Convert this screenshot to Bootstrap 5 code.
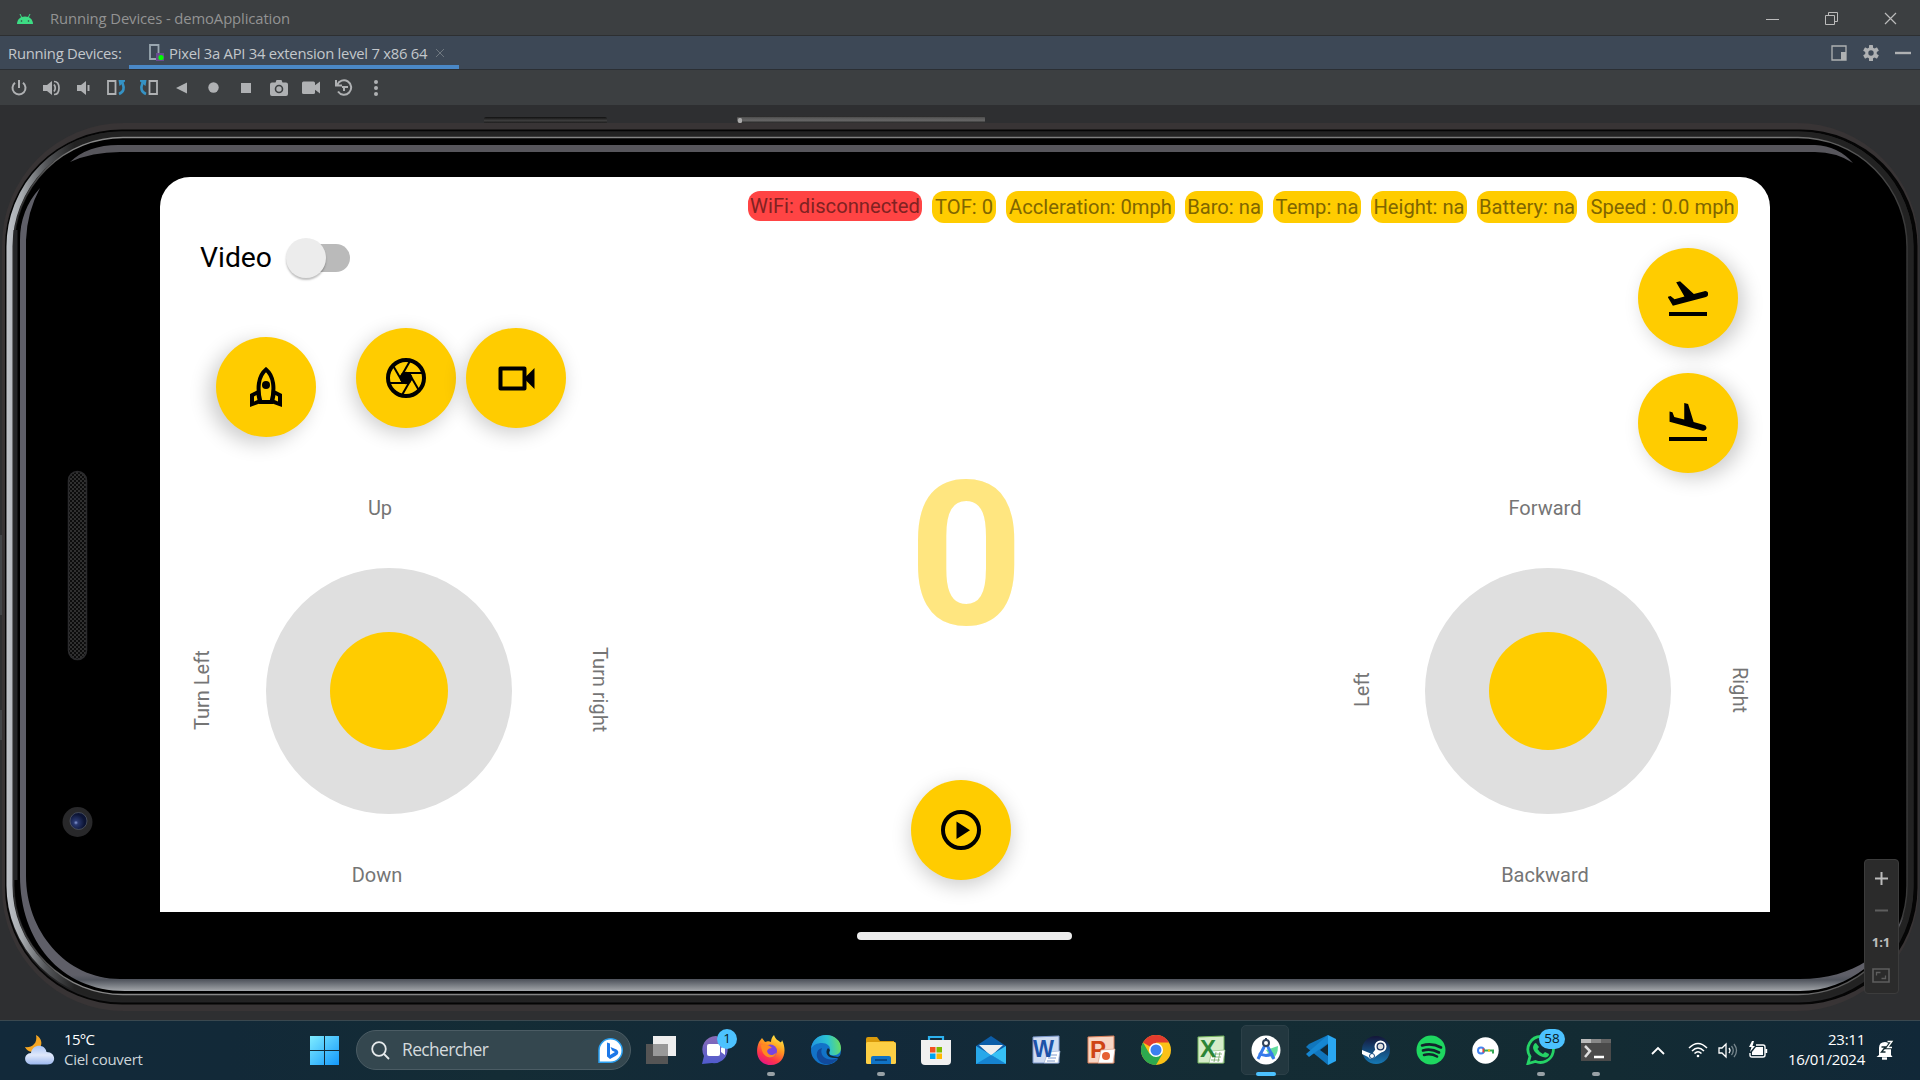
<!DOCTYPE html>
<html lang="fr">
<head>
<meta charset="utf-8">
<title>Running Devices - demoApplication</title>
<link rel="stylesheet" href="https://cdn.jsdelivr.net/npm/bootstrap@5.3.0/dist/css/bootstrap.min.css">
<style>
body{width:1920px;height:1080px;overflow:hidden;background:#2e2f31;font-family:"Open Sans","Noto Sans",sans-serif;line-height:1}
svg{display:block;flex:none}
.titlebar{height:36px;background:#3c3f41;border-bottom:1px solid #2d2f31;color:#939393;font-size:14.8px;padding:2px 17px 0}
.titlebar .caption-text{margin-left:17px;letter-spacing:-.1px}
.win-btns{gap:46px;margin-right:6px}
.tabstrip{height:34px;background:#3d4856;border-bottom:1px solid #2b2f34;color:#c3c7cb;font-size:14.8px;padding-left:8px;padding-right:8px}
.strip-label{width:121px;letter-spacing:-.25px;padding-top:2px}
.dev-tab{width:330px;height:33px;border-bottom:4px solid #4a88c7;padding:4px 14px 0 20px}
.dev-tab .tab-name{margin-left:5px;width:258px;letter-spacing:-.25px;white-space:nowrap;padding-top:1px}
.tab-tools{gap:16px;margin-right:1px}
.toolstrip{height:35px;background:#3c3f41;padding-left:3px}
.tool{width:32.45px;height:35px;display:flex;align-items:center;justify-content:center}
.stage{height:915px;position:relative;padding:72px 150px 0 160px}
.phone-shell{position:absolute;left:0;top:0}
.screen{position:relative;height:735px;width:1610px;background:#fff;border-radius:30px 30px 0 0;font-family:Roboto,sans-serif;color:#757575;font-size:20px}
.chips{padding:14px 32px 0 0;gap:10px;height:46px}
.chip{height:32px;border-radius:12px;background:#fc0;color:#806600;display:flex;align-items:center;justify-content:center;white-space:nowrap;padding-top:1px;font-size:20.2px}
.chip-off{height:30px;background:#f44;color:#802222}
.col-l{width:460px}.col-r{width:420px}
.col-c{padding-right:40px}
.video-row{padding:14px 0 0 40px;height:55px;color:#000;font-size:28.3px}
.video-row span:first-child{padding-top:2px}
.toggle{width:64px;height:40px;margin-left:14px;position:relative;display:flex;align-items:center}
.toggle::before{content:"";width:50px;height:28px;margin-left:14px;border-radius:14px;background:#bababa}
.toggle::after{content:"";position:absolute;left:0;top:0;width:40px;height:40px;border-radius:50%;background:#ececec;box-shadow:0 2px 2px rgba(0,0,0,.25)}
.fab{width:100px;height:100px;border-radius:50%;background:#fc0;display:flex;align-items:center;justify-content:center;flex:none;box-shadow:-3px 5px 20px rgba(0,0,0,.2)}
.fab-r{box-shadow:6px 5px 20px rgba(0,0,0,.2)}
.fab-c{box-shadow:0 6px 20px rgba(0,0,0,.2)}
.fab-row{padding:50px 0 0 56px;height:160px}
.fab-row .fab:nth-child(1){margin-top:9px;margin-right:40px;box-shadow:-7px 6px 20px rgba(0,0,0,.2)}
.fab-row .fab:nth-child(2){margin-right:10px}
.dir{height:24px;display:flex;align-items:center;justify-content:center}
.vert{writing-mode:vertical-rl;width:24px;height:120px;display:flex;align-items:center;justify-content:center;white-space:nowrap;margin-top:-2px}
.flip{transform:rotate(180deg)}
.pad{width:246px;height:246px;border-radius:50%;background:#dfdfdf;display:flex;align-items:center;justify-content:center;flex:none}
.pad::after{content:"";width:118px;height:118px;border-radius:50%;background:#fc0}
.count{font-weight:700;font-size:200px;color:#ffe680;line-height:200px;margin-top:233px;margin-left:2px}
.home-bar{position:relative;width:215px;height:8px;border-radius:4px;background:#ececec;margin:20px 0 0 697px}
.zoom-box{position:absolute;left:1864px;top:754px;width:35px;height:135px;background:#2b2b2b;border:1px solid #3c3c3c;border-radius:4px;padding:12px 1px 10px 0;color:#bbb;font-size:13px;font-weight:700}
.taskbar{height:60px;background:linear-gradient(90deg,#12293a 0,#122938 12%,#142c35 26%,#12293a 45%,#142c34 64%,#132b33 84%,#112838);border-top:1px solid #3a484f;padding-bottom:1px;color:#fff;font-size:15px}
.weather{width:310px;padding-left:24px}
.weather-text{margin-left:9px;line-height:20px;padding-bottom:3px}
.finder{width:275px;height:40px;border-radius:20px;background:#34474f;border:1px solid #4b5c64;margin:0 2px 0 17px;padding:0 7px 0 14px;color:#d5dbde;font-size:17.4px}
.app{width:55px;height:59px;position:relative;display:flex;align-items:center;justify-content:center;flex:none}
.run::after,.live::after{content:"";position:absolute;bottom:4px;width:8px;height:4px;border-radius:2px;background:#98a1a6}
.live::after{width:20px;background:#4cc2ff}
.live::before{content:"";position:absolute;left:3px;top:4px;width:48px;height:50px;border-radius:5px;background:#22373f;border:1px solid #2c4048}
.live svg{position:relative}
.note{position:absolute;top:8px;left:29px;min-width:20px;height:20px;border-radius:10px;background:#4cc2ff;color:#0a1a24;font-size:13.5px;display:flex;align-items:center;justify-content:center}
.note-w{left:26px;width:26px}
.clock{width:97px;text-align:right;white-space:nowrap;line-height:20px;letter-spacing:-.25px;padding-bottom:2px}
</style>
<script src="https://cdn.jsdelivr.net/npm/bootstrap@5.3.0/dist/js/bootstrap.bundle.min.js"></script>
</head>
<body>
<header class="titlebar d-flex align-items-center">
  <svg width="16" height="12" viewBox="0 0 16 12"><path d="M0 11C0 7 3 3.500 8 3.500S16 7 16 11z" fill="#3ddc84"/><path d="M3 1l2 4M13 1l-2 4" stroke="#3ddc84"/><circle cx="4.500" cy="8" r=".8" fill="#3c3f41"/><circle cx="11.500" cy="8" r=".8" fill="#3c3f41"/></svg>
  <span class="caption-text">Running Devices - demoApplication</span>
  <div class="win-btns d-flex align-items-center ms-auto">
    <svg width="13" height="13"><path d="M0 7.500h13" stroke="#bbb"/></svg>
    <svg width="13" height="13" fill="none" stroke="#bbb"><path d="M.5 3.500h9v9h-9zM3.500 3.500v-3h9v9h-3"/></svg>
    <svg width="13" height="13"><path d="M1 1l11 11M12 1L1 12" stroke="#bbb" stroke-width="1.200"/></svg>
  </div>
</header>
<nav class="tabstrip d-flex align-items-center">
  <span class="strip-label">Running Devices:</span>
  <div class="dev-tab d-flex align-items-center">
    <svg width="15" height="17"><path d="M1 1h8.500v14H1z" fill="none" stroke="#9aa7b0" stroke-width="1.800"/><rect x="7" y="9" width="8" height="8" fill="#6a4b91"/><circle cx="12" cy="13.500" r="2.600" fill="#0f0"/></svg>
    <span class="tab-name">Pixel 3a API 34 extension level 7 x86 64</span>
    <svg class="ms-auto" width="10" height="10"><path d="M1 1l8 8M9 1L1 9" stroke="#6f7880"/></svg>
  </div>
  <div class="tab-tools d-flex align-items-center ms-auto">
    <svg width="16" height="16"><path d="M1 1h14v14H1z" fill="none" stroke="#afb1b3" stroke-width="1.300"/><path d="M10 7h5v8h-5z" fill="#afb1b3"/></svg>
    <svg width="16" height="16" viewBox="-8 -8 16 16"><g fill="#afb1b3"><rect x="-2" y="-8" width="4" height="16" rx=".6"/><rect x="-2" y="-8" width="4" height="16" rx=".6" transform="rotate(60)"/><rect x="-2" y="-8" width="4" height="16" rx=".6" transform="rotate(120)"/><circle r="5.800"/></g><circle r="2.700" fill="#3d4856"/></svg>
    <svg width="16" height="16"><path d="M0 8h16" stroke="#afb1b3" stroke-width="2.400"/></svg>
  </div>
</nav>
<div class="toolstrip d-flex align-items-center">
  <span class="tool"><svg width="16" height="16" fill="none" stroke="#afb1b3" stroke-width="2"><path d="M8 0v8M4 2.800a6.500 6.500 0 1 0 8 0"/></svg></span>
  <span class="tool"><svg width="18" height="16"><path d="M0 5h4l5-4v14l-5-4H0z" fill="#afb1b3"/><path d="M11 4.500q2.500 3.500 0 7M11 1.500q5 0 5 6.500t-5 6.500" fill="none" stroke="#afb1b3" stroke-width="1.700"/></svg></span>
  <span class="tool"><svg width="14" height="16"><path d="M0 5h4l5-4v14l-5-4H0z" fill="#afb1b3"/><path d="M11.500 5v6" stroke="#afb1b3" stroke-width="2"/></svg></span>
  <span class="tool"><svg width="19" height="17" fill="none"><path d="M1 2h7.500v13H1z" stroke="#afb1b3" stroke-width="1.800"/><path d="M12 15c5-2 5.500-6 3.500-11" stroke="#3592c4" stroke-width="2.600"/><path d="M11.500 1H18v1.500L12.500 7z" fill="#3592c4"/></svg></span>
  <span class="tool"><svg width="19" height="17" fill="none"><path d="M10.500 2H18v13h-7.500z" stroke="#afb1b3" stroke-width="1.800"/><path d="M7 15C2 13 1.500 9 3.500 4" stroke="#3592c4" stroke-width="2.600"/><path d="M7.500 1H1v1.500L6.500 7z" fill="#3592c4"/></svg></span>
  <span class="tool"><svg width="11" height="12"><path d="M11 .5v11L0 6z" fill="#afb1b3"/></svg></span>
  <span class="tool"><svg width="11" height="11"><circle cx="5.500" cy="5.500" r="5.200" fill="#afb1b3"/></svg></span>
  <span class="tool"><svg width="10" height="10"><path d="M0 0h10v10H0z" fill="#afb1b3"/></svg></span>
  <span class="tool"><svg width="18" height="16"><path d="M2 2.500h3.500L6.500 0h5l1 2.500H16a2 2 0 0 1 2 2V14a2 2 0 0 1-2 2H2a2 2 0 0 1-2-2V4.500a2 2 0 0 1 2-2z" fill="#afb1b3"/><circle cx="9" cy="9" r="3.500" fill="none" stroke="#3c3f41" stroke-width="1.600"/></svg></span>
  <span class="tool"><svg width="18" height="13"><rect width="13" height="12.500" y=".5" rx="1.500" fill="#afb1b3"/><path d="M18 .5v12l-6-4.500V5z" fill="#afb1b3"/></svg></span>
  <span class="tool"><svg width="18" height="17" fill="none" stroke="#afb1b3" stroke-width="2"><path d="M2.200 6A7.200 7.200 0 1 1 3 12.500M1 1v5.500h6M9 12V8h4M9 8H7"/></svg></span>
  <span class="tool"><svg width="4" height="16" fill="#afb1b3"><circle cx="2" cy="2" r="2"/><circle cx="2" cy="8" r="2"/><circle cx="2" cy="14" r="2"/></svg></span>
</div>

<main class="stage">
  <svg class="phone-shell" width="1920" height="915" viewBox="0 105 1920 915">
    <defs>
      <linearGradient id="btn" x1="0" y1="0" x2="0" y2="1"><stop offset="0" stop-color="#1b1b1b"/><stop offset=".2" stop-color="#555"/><stop offset=".55" stop-color="#666"/><stop offset="1" stop-color="#0b0b0b"/></linearGradient>
      <linearGradient id="btn2" x1="0" y1="0" x2="0" y2="1"><stop offset="0" stop-color="#111"/><stop offset=".5" stop-color="#3c3c3c"/><stop offset="1" stop-color="#111"/></linearGradient>
      <linearGradient id="silver" gradientUnits="userSpaceOnUse" x1="6" y1="0" x2="120" y2="0"><stop offset="0" stop-color="#bfc3c9"/><stop offset=".14" stop-color="#a5a9ad"/><stop offset=".35" stop-color="#55575a"/><stop offset=".6" stop-color="#222"/></linearGradient>
      <linearGradient id="rim" gradientUnits="userSpaceOnUse" x1="0" y1="975" x2="0" y2="991"><stop offset="0" stop-color="#5f5f68"/><stop offset=".3" stop-color="#50545d"/><stop offset="1" stop-color="#a3a6aa"/></linearGradient>
      <linearGradient id="hair" gradientUnits="userSpaceOnUse" x1="0" y1="0" x2="1920" y2="0"><stop offset="0" stop-color="#777" stop-opacity="0"/><stop offset=".04" stop-color="#888"/><stop offset=".93" stop-color="#777"/><stop offset="1" stop-color="#333"/></linearGradient>
      <pattern id="mesh" width="4" height="4" patternUnits="userSpaceOnUse"><path d="M0 0h4v4H0z" fill="#0c0c0c"/><path d="M0 0h2v2H0zM2 2h2v2H2z" fill="#303030"/></pattern>
      <radialGradient id="lens" cx=".35" cy=".6"><stop offset="0" stop-color="#8a9cd8"/><stop offset=".25" stop-color="#2a3970"/><stop offset="1" stop-color="#0c1434"/></radialGradient>
    </defs>
    <rect x="484" y="117" width="123" height="7" rx="2" fill="url(#btn2)"/>
    <rect x="737" y="116" width="248" height="8" rx="2" fill="url(#btn)"/><rect x="738" y="118" width="4" height="5" rx="1.500" fill="#aaa"/>
    <path d="M1210 123.500h25M1385 123.500h48M1740 123.500h30" stroke="#253238"/>
    <path d="M1 535v80M1 710v30" stroke="#424548" stroke-width="2"/>
    <rect x="2" y="123" width="1916.500" height="888" rx="122" fill="#383435"/>
    <rect x="5" y="129.500" width="1912.500" height="875" rx="117" fill="#050505"/>
    <rect x="6.500" y="131.500" width="1907" height="871" rx="115" fill="#232324"/>
    <rect x="9.500" y="134.500" width="1901" height="863" rx="112" fill="none" stroke="url(#silver)" stroke-width="6"/>
    <rect x="14" y="137.500" width="1893" height="857" rx="109" fill="#000" stroke="url(#hair)" stroke-width="1.400"/>
    <rect x="13.500" y="230" width="4" height="650" fill="#242527"/>
    <path d="M70 162Q88 145 118 145H1815Q1838 146 1853 163Q1836 152 1815 152H120Q92 152 70 162z" fill="#57565c"/>
    <path d="M40 188Q20 210 20 240V876C20 940 60 991 125 991H1800C1850 991 1890 955 1904 915C1888 952 1855 979 1800 979H120C65 979 26 930 26 876V240Q27 212 40 188z" fill="url(#rim)"/>
    <rect x="68.500" y="471.500" width="18" height="188" rx="9" fill="url(#mesh)" stroke="#2a2a2c" stroke-width="1.500"/>
    <circle cx="77.500" cy="822" r="15" fill="#28282a"/><ellipse cx="78.500" cy="821" rx="8.500" ry="8.500" fill="url(#lens)" stroke="#555b68" stroke-width=".7"/>
  </svg>

  <section class="screen d-flex flex-column">
    <div class="chips d-flex justify-content-end align-items-start">
      <span class="chip chip-off" style="width:174px">WiFi: disconnected</span>
      <span class="chip" style="width:64px">TOF: 0</span>
      <span class="chip" style="width:169px">Accleration: 0mph</span>
      <span class="chip" style="width:78px">Baro: na</span>
      <span class="chip" style="width:88px">Temp: na</span>
      <span class="chip" style="width:96px">Height: na</span>
      <span class="chip" style="width:100px">Battery: na</span>
      <span class="chip" style="width:151px">Speed : 0.0 mph</span>
    </div>
    <div class="d-flex flex-fill">
      <div class="col-l">
        <div class="video-row d-flex align-items-center"><span>Video</span><span class="toggle"></span></div>
        <div class="fab-row d-flex align-items-start">
          <span class="fab"><svg width="32" height="40" viewBox="0 0 32 40"><path d="M10.500 35C7 22 8 9 16 2.500C24 9 25 22 21.500 35z" fill="none" stroke="#000" stroke-width="4"/><circle cx="16" cy="18" r="4"/><path d="M8 23L0 27v13l11-4zM24 23l8 4v13l-11-4z"/><path d="M6.500 28L4 29.500V34.500L7.500 33zM25.500 28l2.500 1.500v5L24.500 33z" fill="#fc0"/></svg></span>
          <span class="fab"><svg width="40" height="40" viewBox="-20 -20 40 40"><circle r="18" fill="none" stroke="#000" stroke-width="4"/><circle r="6.200"/><g stroke="#000" stroke-width="2"><path d="M-5.500-.5L4-17"/><path d="M-5.500-.5L4-17" transform="rotate(60)"/><path d="M-5.500-.5L4-17" transform="rotate(120)"/><path d="M-5.500-.5L4-17" transform="rotate(180)"/><path d="M-5.500-.5L4-17" transform="rotate(240)"/><path d="M-5.500-.5L4-17" transform="rotate(300)"/></g></svg></span>
          <span class="fab"><svg width="37" height="25"><rect x="2.500" y="2.500" width="24" height="20" fill="none" stroke="#000" stroke-width="4" stroke-linejoin="round"/><path d="M26 12.500L36.500 2v21z"/></svg></span>
        </div>
        <div class="dir" style="width:120px;margin:58px 0 0 160px">Up</div>
        <div class="d-flex align-items-center" style="margin:48px 0 0 30px">
          <span class="vert flip">Turn Left</span>
          <span class="pad" style="margin:0 76px 0 52px"></span>
          <span class="vert">Turn right</span>
        </div>
        <div class="dir" style="width:120px;margin:49px 0 0 157px">Down</div>
      </div>
      <div class="col-c flex-fill d-flex flex-column align-items-center">
        <div class="count">0</div>
        <span class="fab fab-c" style="margin:124px 9px 0 0"><svg width="40" height="40"><circle cx="20" cy="20" r="18" fill="none" stroke="#000" stroke-width="4"/><path d="M15.500 11.500v17.500L29 20.200z"/></svg></span>
      </div>
      <div class="col-r">
        <div class="d-flex flex-column align-items-end" style="gap:25px;padding:25px 32px 0 0">
          <span class="fab fab-r"><svg width="40" height="40" viewBox="2 2 20 20"><path d="M2.500 19h19v2h-19zM22.070 9.640c-.21-.8-1.040-1.280-1.840-1.060L14.920 10l-6.900-6.430-1.930.51 4.140 7.170-4.970 1.330-1.970-1.540-1.450.39 2.590 4.490L21 11.490c.81-.23 1.280-1.050 1.070-1.850z"/></svg></span>
          <span class="fab fab-r"><svg width="40" height="40" viewBox="2 2 20 20"><path d="M2.500 19h19v2h-19zM19.340 15.850c.8.210 1.620-.26 1.840-1.060.21-.8-.26-1.620-1.060-1.840l-5.310-1.420-2.760-9.020L10.120 2v8.280L5.150 8.950l-.93-2.320-1.450-.39v5.170l16.570 4.440z"/></svg></span>
        </div>
        <div class="dir" style="width:120px;margin:23px 0 0 135px">Forward</div>
        <div class="d-flex align-items-center" style="margin:48px 0 0 0">
          <span class="vert flip">Left</span>
          <span class="pad" style="margin:0 57px 0 51px"></span>
          <span class="vert">Right</span>
        </div>
        <div class="dir" style="width:120px;margin:49px 0 0 135px">Backward</div>
      </div>
    </div>
  </section>
  <div class="home-bar"></div>
  <div class="zoom-box d-flex flex-column align-items-center justify-content-between">
    <svg width="13" height="13"><path d="M0 6.500h13M6.500 0v13" stroke="#bbb" stroke-width="2"/></svg>
    <svg width="13" height="13"><path d="M0 6.500h13" stroke="#5e5e5e" stroke-width="2"/></svg>
    <span>1:1</span>
    <svg width="18" height="15" fill="none" stroke="#5e5e5e"><path d="M1 1h16v13H1z" stroke-width="1.600"/><path d="M4.500 7.500v-3h4M13.500 7.500v3h-4" stroke-width="1.300"/></svg>
  </div>
</main>

<footer class="taskbar d-flex align-items-center">
  <div class="weather d-flex align-items-center">
    <svg width="31" height="31" viewBox="0 0 31 31"><defs><linearGradient id="cl" x1="0" y1="0" x2="0" y2="1"><stop offset="0" stop-color="#a9c4f5"/><stop offset=".5" stop-color="#dfe8fa"/><stop offset="1" stop-color="#9cb8ef"/></linearGradient></defs><path d="M12 0c6 3 8 11 1 15-4 3-10 2-12-3 6 1 13-3 11-12z" fill="#f5a623"/><path d="M8 29.500c-9 0-9-11-1-11.500C8 9 21 8 22.500 17c10 0 10 12.500 1 12.500z" fill="url(#cl)"/></svg>
    <div class="weather-text"><div style="letter-spacing:-.7px">15°C</div><div style="color:#ccd5da;letter-spacing:-.3px">Ciel couvert</div></div>
  </div>
  <svg width="29" height="29"><defs><linearGradient id="wn" gradientUnits="userSpaceOnUse" x1="0" y1="0" x2="29" y2="29"><stop stop-color="#7fecff"/><stop offset="1" stop-color="#1398fb"/></linearGradient></defs><path d="M0 0h14v14H0zM15 0h14v14H15zM0 15h14v14H0zM15 15h14v14H15z" fill="url(#wn)"/></svg>
  <div class="finder d-flex align-items-center">
    <svg width="19" height="19" fill="none" stroke="#e6eaec" stroke-width="1.800"><circle cx="8" cy="8" r="6.800"/><path d="M13 13l5 5"/></svg>
    <span style="margin-left:12px;letter-spacing:-.6px">Rechercher</span>
    <svg class="ms-auto" width="25" height="25"><path d="M12.500.8a11.700 11.700 0 1 1 0 23.400H1V12.500A11.500 11.500 0 0 1 12.500.8z" fill="#fff" stroke="#299ff0" stroke-width="1.500"/><path d="M9 4.500l3 1V17l5-3-3-1.500-1.500-3.500 6 2.500c3 2 2 5-1 6.500L12 21l-3-2.500z" fill="#1c78e8"/></svg>
  </div>

  <span class="app"><svg width="30" height="30"><path d="M0 9h22v20H0z" fill="#555"/><path d="M7 1h23v20H7z" fill="#eee"/><path d="M7 9h15v12H7z" fill="#999"/></svg></span>
  <span class="app"><svg width="29" height="30"><defs><linearGradient id="ct" x1="0" y1="0" x2="0" y2="1"><stop stop-color="#8b6bb5"/><stop offset="1" stop-color="#4f5bcf"/></linearGradient></defs><path d="M15 1a13.500 13.500 0 1 1-4 27l-10 1 2-8A13.500 13.500 0 0 1 15 1z" fill="url(#ct)"/><rect x="6" y="9" width="13" height="12" rx="2" fill="#fff"/><path d="M20 13l4-3v10l-4-3z" fill="#fff"/></svg><b class="note fw-normal">1</b></span>
  <span class="app run"><svg width="30" height="30"><defs><linearGradient id="ff" x1=".8" y1="0" x2=".3" y2="1"><stop stop-color="#fff14a"/><stop offset=".4" stop-color="#ff9a1f"/><stop offset=".75" stop-color="#ff3647"/><stop offset="1" stop-color="#e31587"/></linearGradient></defs><path d="M3 7l3-4 3 4c3-1 4-1 6 0 0-3 1-5 3-7 2 5 4 5 6 7 1 1 2-1 2-2 6 12 1 25-11 25C3 30-2 19 3 7z" fill="url(#ff)"/><circle cx="14.500" cy="16" r="6.500" fill="#7a45e0"/><path d="M5 10c5-1 9 0 11 3-3 0-4 1-5 3 1 5 6 5 9 2-1 6-14 8-15-8z" fill="#ff8a20"/></svg></span>
  <span class="app"><svg width="30" height="30"><defs><linearGradient id="eg" x1="0" y1=".3" x2="1" y2=".2"><stop stop-color="#2196e0"/><stop offset=".55" stop-color="#2bc3d2"/><stop offset="1" stop-color="#6ee05a"/></linearGradient></defs><circle cx="15" cy="15" r="15" fill="#1273c8"/><path d="M0 14C1 5 7 0 15 0c9 0 15 6 15 13 0 5-4 8-9 7-3 0-3-2-2-4 1-5-3-8-8-8C6 8 2 10 0 14z" fill="url(#eg)"/><path d="M11 13c-3 7 4 15 16 10-6 9-18 8-21-1-1-5 1-8 5-9z" fill="#114a9c"/><path d="M19 15c-2 4-1 6 8 7l3-2v6l-4-3c-9 1-13-5-9-10z" fill="#122936"/></svg></span>
  <span class="app run"><svg width="30" height="29"><path d="M0 3q0-2 2-2h9l3 4h14v10H0z" fill="#d99a0b"/><rect y="6" width="30" height="22" rx="1.500" fill="#fdcf45"/><path d="M5 28v-6q0-2 2-2h16q2 0 2 2v6z" fill="#1173c5"/><path d="M9 24h12" stroke="#0a4a87" stroke-width="2"/></svg></span>
  <span class="app"><svg width="30" height="30"><path d="M8 6V2h14v4" fill="none" stroke="#2cb1ee" stroke-width="2.200"/><path d="M0 5h30v21q0 4-4 4H4q-4 0-4-4z" fill="#f0f0f0"/><path d="M9 12h5.500v5.500H9z" fill="#f25022"/><path d="M15.500 12H21v5.500h-5.500z" fill="#7fba00"/><path d="M9 18.500h5.500V24H9z" fill="#00a4ef"/><path d="M15.500 18.500H21V24h-5.500z" fill="#ffb900"/></svg></span>
  <span class="app"><svg width="30" height="28"><path d="M0 10L15 0l15 10v18H0z" fill="#0c5da8"/><path d="M3 9h24L15 20z" fill="#eee"/><path d="M0 10l30 18H0z" fill="#28a8ea"/><path d="M30 10v18L15 19z" fill="#36c0f5"/><path d="M0 28h30L15 19z" fill="#1683d0"/></svg></span>
  <span class="app"><svg width="30" height="30"><path d="M2 2l26-1v27H2z" fill="#cfdcf2" stroke="#7c98cc"/><path d="M17 17l12-1-2 12H13z" fill="#fff" stroke="#9db1d5" stroke-width=".7"/><path d="M18 20h8M17 23h8M16 26h8" stroke="#7c98cc"/><text x="2" y="22" font-family="Liberation Sans" font-weight="700" font-size="23" textLength="21" lengthAdjust="spacingAndGlyphs" fill="#1c52a8">W</text></svg></span>
  <span class="app"><svg width="30" height="30"><path d="M2 2l26-1v27H2z" fill="#f8d6c4" stroke="#dd8059"/><text x="4" y="23" font-family="Liberation Sans" font-weight="700" font-size="24" fill="#cf4414">P</text><path d="M15 15l14-1-2 14H12z" fill="#fff" stroke="#dda58c" stroke-width=".7"/><circle cx="20" cy="21" r="4" fill="#e66033"/></svg></span>
  <span class="app"><svg width="30" height="30" viewBox="-15 -15 30 30"><circle r="15" fill="#fbc116"/><path d="M0 0L-13-7.500A15 15 0 0 1 13-7.500H0z" fill="#e33b2e"/><path d="M-13-7.500A15 15 0 0 0 0 15L6.500 3.700 0 0-6.500 3.700z" fill="#2da94f"/><circle r="7" fill="#fff"/><circle r="5.500" fill="#3c80f0"/></svg></span>
  <span class="app"><svg width="30" height="30"><path d="M2 2l26-1v27H2z" fill="#d5ecc9" stroke="#73b35c"/><path d="M16 16l13-1-2 13H13z" fill="#fff" stroke="#94bd86" stroke-width=".7"/><path d="M17 19h9M16 22h9M15 25h9M20 17l-2 10M24 17l-2 10" stroke="#73a765" stroke-width=".8"/><text x="4" y="22" font-family="Liberation Sans" font-weight="700" font-size="24" fill="#2b8535">X</text></svg></span>
  <span class="app live"><svg width="30" height="30"><circle cx="15" cy="15" r="14.500" fill="#fff"/><path d="M15 15l12-4q0 10-6 13z" fill="#39d584" opacity=".8"/><path d="M7 24l8-16 8 16M8 18q7 5 14 0" fill="none" stroke="#367bea" stroke-width="3"/><circle cx="15" cy="8" r="3" fill="#fff" stroke="#304159" stroke-width="2"/><path d="M15 3v2" stroke="#304159" stroke-width="2"/></svg></span>
  <span class="app"><svg width="30" height="30"><path d="M22 0v30L0 12l3-3z" fill="#1176bd"/><path d="M0 19L22 0v8L3 22z" fill="#1687d2"/><path d="M22 0l8 4v22l-8 4z" fill="#2aa7f2"/><path d="M22 9v12l-8-6z" fill="#122935"/></svg></span>
  <span class="app"><svg width="28" height="28"><defs><linearGradient id="st" x1="0" y1="0" x2="0" y2="1"><stop stop-color="#141538"/><stop offset="1" stop-color="#1679b5"/></linearGradient></defs><circle cx="14" cy="14" r="14" fill="url(#st)"/><path d="M0 14l10 4 6-8 5 5-8 6q-4 4-7 0L0 18z" fill="#fff"/><circle cx="18.500" cy="10.500" r="5" fill="#18305d" stroke="#fff" stroke-width="2"/><circle cx="18.500" cy="10.500" r="2.700" fill="#ddd"/><circle cx="10" cy="20" r="2.500" fill="none" stroke="#174b80"/></svg></span>
  <span class="app"><svg width="30" height="30"><circle cx="15" cy="15" r="14.500" fill="#1ed760"/><path d="M6 10.500q10-3 19 2M7 15.500q8-2.500 16 2M8 20q7-2 13 1.500" stroke="#12242c" stroke-width="2.600" fill="none" stroke-linecap="round"/></svg></span>
  <span class="app"><svg width="27" height="27"><circle cx="13.500" cy="13.500" r="13.200" fill="#fff"/><circle cx="9" cy="13.500" r="3" fill="none" stroke="#4285f4" stroke-width="2"/><path d="M11.500 11.500v4" stroke="#ea4335" stroke-width="2"/><path d="M12 13.500h9v3" stroke="#34a853" stroke-width="2" fill="none"/><path d="M16 13.500h2" stroke="#fbbc04" stroke-width="2"/></svg></span>
  <span class="app run"><svg width="30" height="30"><path d="M15.500 1.500a13 13 0 1 1-6 25l-7.500 2 2-7A13 13 0 0 1 15.500 1.500z" fill="none" stroke="#25d366" stroke-width="2.800"/><path d="M10 8l3 4-1.500 2q2 3.500 5.500 5l2-2 4 2c0 3-3 4-6 3-6-2-10-6-10-10q1-4 3-4z" fill="#25d366"/></svg><b class="note note-w fw-normal">58</b></span>
  <span class="app run"><svg width="30" height="22"><rect width="30" height="22" fill="#4a4a4a"/><path d="M0 0h10v4H0z" fill="#bbb"/><path d="M10 0h10v4H10z" fill="#888"/><path d="M20 0h10v4H20z" fill="#666"/><path d="M4 7l5 5-5 6" fill="none" stroke="#ddd" stroke-width="2.500"/><path d="M13 18h10" stroke="#fff" stroke-width="2.500"/></svg></span>

  <div class="d-flex align-items-center" style="margin-left:28px">
    <svg width="14" height="9"><path d="M1 8l6-6 6 6" fill="none" stroke="#fff" stroke-width="1.800"/></svg>
    <svg width="20" height="16" style="margin-left:23px" fill="none" stroke="#fff" stroke-width="1.500"><path d="M1 6q9-9 18 0M4 9q6-6 12 0M6.500 11.500q3.500-3.500 7 0"/><circle cx="10" cy="14" r="1.300" fill="#fff" stroke="none"/></svg>
    <svg width="20" height="17" style="margin-left:10px" fill="none" stroke="#fff" stroke-width="1.300"><path d="M1 6h3l4-4v13l-4-4H1zM11 6q2 2.500 0 5"/><path d="M13.500 4q3.500 4.500 0 9M16 2q5 6.500 0 13" stroke="#77868d"/></svg>
    <svg width="20" height="18" style="margin-left:10px" fill="none" stroke="#fff" stroke-width="1.400"><path d="M8 4h7q2 0 2 2v8q0 2-2 2H4q-2 0-2-2v-2M18.500 8v4"/><path d="M8 6h7v8H4v-3z" fill="#fff" stroke="none"/><path d="M4 0L1 6h2.500L2 11l5-6H4.500L6 0z" fill="#fff" stroke="none"/></svg>
    <div class="clock">23:11<br>16/01/2024</div>
    <svg width="18" height="21" style="margin-left:11px"><path d="M3 15V8q0-6 6-6t6 6v7l1.500 2H.5z" fill="#fff"/><path d="M6 18.500h5" stroke="#fff" stroke-width="2.400"/><path d="M5.500 7h4l-4 5h4" stroke="#12292f" stroke-width="1.400" fill="none"/><path d="M11.500 1.500H16l-4.500 6H16" stroke="#12292f" stroke-width="3.500" fill="none"/><path d="M11.500 1.500H16l-4.500 6H16" stroke="#fff" stroke-width="1.300" fill="none"/></svg>
  </div>
</footer>
</body>
</html>
